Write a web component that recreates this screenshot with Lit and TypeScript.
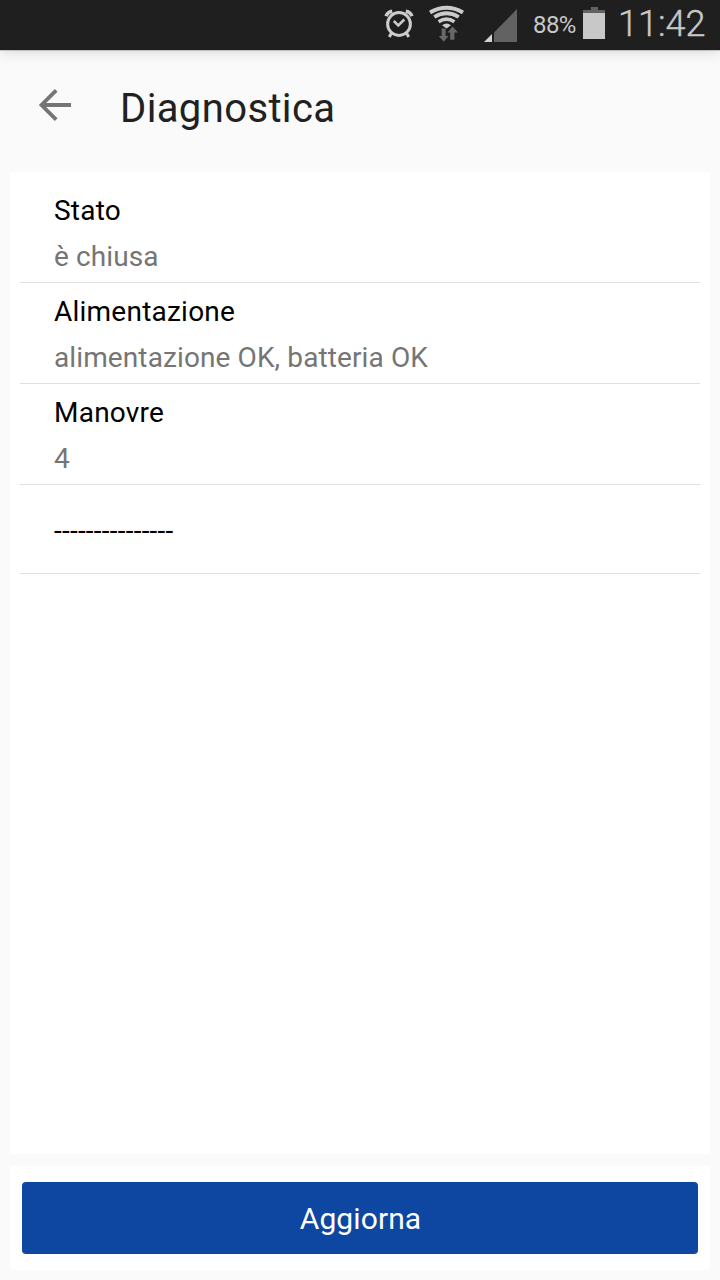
import { LitElement, html, css, nothing } from "lit";
import { customElement, property } from "lit/decorators.js";

@customElement("status-bar")
class StatusBar extends LitElement {
  static styles = css`
    :host {
      display: flex;
      height: 50px;
      background: #1f1f1f;
      color: #c8c8c8;
      justify-content: flex-end;
      box-sizing: border-box;
      padding-right: 14px;
      flex: none;
      box-shadow: 0 1px 0 rgba(0, 0, 0, 0.16), 0 2px 12px rgba(0, 0, 0, 0.14);
    }
    svg { height: 50px; flex: none; }
    .battery-level {
      font-size: 24px;
      line-height: 50px;
      width: 42px;
      letter-spacing: -0.6px;
      white-space: nowrap;
    }
    .battery { width: 24px; margin-left: 7px; }
    .signals { width: 153px; }
    .clock {
      font-size: 36px;
      font-weight: 300;
      line-height: 48px;
      width: 88px;
      margin-left: 12px;
      white-space: nowrap;
      -webkit-text-stroke: 0.4px #c8c8c8;
    }
  `;
  render() {
    return html`
      <svg class="signals" viewBox="380 0 153 50" fill="none" stroke="#cbcbcb">
        <circle cx="399" cy="24" r="11.4" stroke-width="3" />
        <path d="M393.8 21l4.500 4.500 6-6" stroke-width="2.500" />
        <path d="M386.200 16.300q1-4 6-5M411.800 16.300q-1-4-6-5" stroke-width="3.600" />
        <path d="M391.500 33l-2.200 4M406.500 33l2.200 4" stroke-width="3" />
        <path d="M430 12.400Q446.500 3.200 463 12.400" stroke-width="4" />
        <path d="M434.300 17Q446.500 9.500 458.700 17" stroke-width="3.800" />
        <path d="M438.600 21.700Q446.500 16.500 454.400 21.700" stroke-width="3.600" />
        <path d="M442 25.200q4.500-3.400 9 0l-4.500 3.300z" fill="#cbcbcb" stroke="none" />
        <path d="M441.600 28.500h4v7.500h2.900l-4.800 5.700-4.900-5.700h2.800zM450.200 39.700h4.200v-7.200h3.600l-5.500-6-4.900 6h2.600z" fill="#686868" stroke="none" />
        <path d="M517 9v33h-23V32.500z" fill="#626262" stroke="none" />
        <path d="M492 34v8h-8z" fill="#d2d2d2" stroke="none" />
      </svg>
      <span class="battery-level">88%</span>
      <svg class="battery" viewBox="582 0 24 50">
        <path d="M583 10h8V7h7v3h7v3h-22z" fill="#626262" />
        <path d="M583 13h22v26h-22z" fill="#c8c8c8" />
      </svg>
      <span class="clock">11:42</span>
    `;
  }
}

@customElement("diagnostic-row")
class DiagnosticRow extends LitElement {
  @property() label = "";
  @property() value = "";
  static styles = css`
    :host { display: block; border-bottom: 1px solid #e0e0e0; padding: 0 34px; }
    .row {
      height: 100px;
      box-sizing: border-box;
      padding-top: 6px;
      font-size: 28px;
      line-height: 46px;
      color: #000;
    }
    .single { height: 88px; padding-top: 23px; }
    .label { letter-spacing: 0.23px; }
    .value { color: #757575; letter-spacing: 0.11px; }
  `;
  render() {
    return html`<div class="row ${this.value ? "" : "single"}">
      <div class="label">${this.label}</div>
      ${this.value ? html`<div class="value">${this.value}</div>` : nothing}
    </div>`;
  }
}

@customElement("app-root")
class AppRoot extends LitElement {
  static styles = css`
    :host {
      display: flex;
      flex-direction: column;
      height: 1280px;
      background: #fafafa;
      font-family: Roboto, sans-serif;
    }
    header {
      display: flex;
      align-items: center;
      height: 122px;
      flex: none;
    }
    .back { width: 34px; height: 34px; margin: 0 48px 12px 38px; }
    h1 {
      margin: 0 0 4px;
      font-size: 40px;
      font-weight: 400;
      line-height: 48px;
      letter-spacing: 0.38px;
      color: #212121;
    }
    .list {
      flex: 1;
      margin: 0 10px 12px;
      padding: 10px;
      background: #fff;
    }
    footer {
      flex: none;
      margin: 0 10px 10px;
      padding: 16px 12px;
      background: #fff;
    }
    button {
      display: block;
      width: 100%;
      height: 72px;
      padding: 2px 0 0 1px;
      border: 0;
      border-radius: 4px;
      background: #0d47a1;
      color: #fff;
      font: 400 30px/70px Roboto, sans-serif;
      letter-spacing: 0.1px;
    }
  `;
  private items = [
    { label: "Stato", value: "è chiusa" },
    { label: "Alimentazione", value: "alimentazione OK, batteria OK" },
    { label: "Manovre", value: "4" },
    { label: "---------------", value: "" },
  ];
  render() {
    return html`
      <status-bar></status-bar>
      <header>
        <svg class="back" viewBox="38 88 34 34" fill="none" stroke="#757575" stroke-width="3.800">
          <path d="M71 105H42M56.200 90.300L41.500 105l14.700 14.700" />
        </svg>
        <h1>Diagnostica</h1>
      </header>
      <section class="list">
        ${this.items.map((i) => html`<diagnostic-row .label=${i.label} .value=${i.value}></diagnostic-row>`)}
      </section>
      <footer><button>Aggiorna</button></footer>
    `;
  }
}
